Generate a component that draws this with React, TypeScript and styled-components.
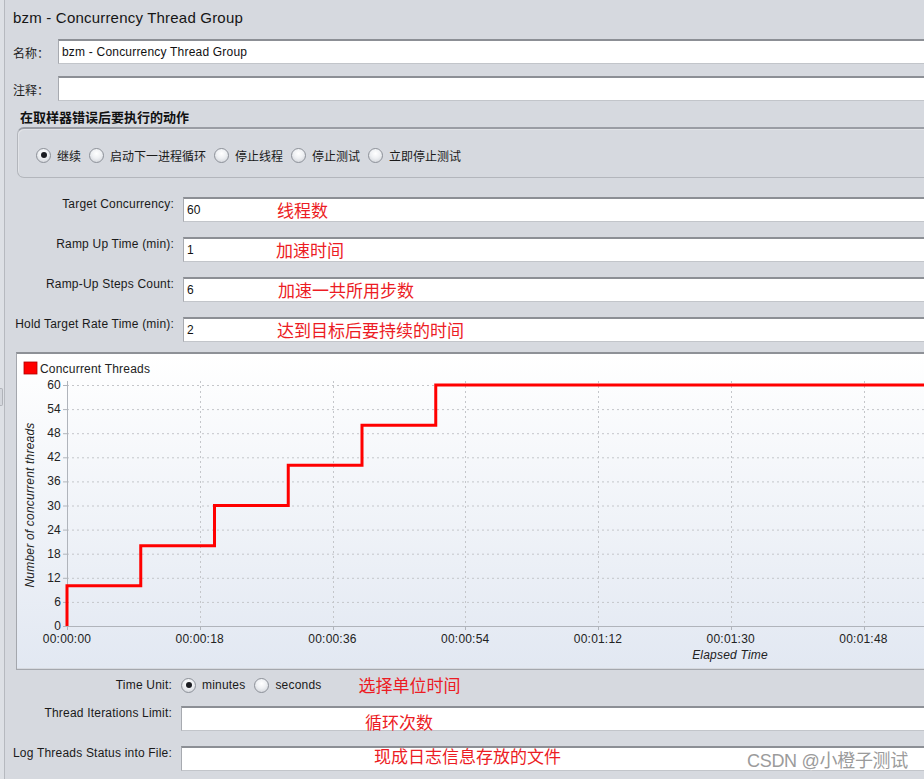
import React from 'react';
import styled, { createGlobalStyle } from 'styled-components';

const GlobalStyle = createGlobalStyle`
  html, body {
    margin: 0;
    padding: 0;
    background: #d6d9df;
    overflow: hidden;
  }
  body {
    font-family: "Liberation Sans", Arial, "Noto Sans CJK SC", sans-serif;
    font-size: 12px;
    color: #1e1e1e;
  }
`;

const CJK = `"Liberation Sans", Arial, "Noto Sans CJK SC", sans-serif`;

/////////////////////////////// CHART DATA /////////////////////////////////
const PX_PER_SEC = 132.75 / 18;
const X0 = 50;
const Y_TOP = 31;
const Y_BOTTOM = 272;
const yOf = (v: number) => Y_BOTTOM - (v / 60) * (Y_BOTTOM - Y_TOP);
const xOf = (sec: number) => X0 + sec * PX_PER_SEC;
const yTicks = [0, 6, 12, 18, 24, 30, 36, 42, 48, 54, 60];
const xTicks = [0, 18, 36, 54, 72, 90, 108];
const fmt = (s: number) => {
    const p = (n: number) => String(n).padStart(2, '0');
    return `00:${p(Math.floor(s / 60))}:${p(s % 60)}`;
};
const stepPoints = () => {
    const pts: string[] = [`${xOf(0)},${yOf(0)}`];
    for (let i = 0; i < 6; i++) {
        pts.push(`${xOf(i * 10)},${yOf((i + 1) * 10)}`);
        pts.push(`${xOf((i + 1) * 10)},${yOf((i + 1) * 10)}`);
    }
    pts.push(`${xOf(180)},${yOf(60)}`);
    return pts.join(' ');
};

const ThreadsChart = () =>
    <svg width="1000" height="314" viewBox="0 0 1000 314" style={{ display: 'block' }}>
        <defs>
            <linearGradient id="bg" x1="0" y1="0" x2="0" y2="1">
                <stop offset="0" stopColor="#ffffff" />
                <stop offset="1" stopColor="#e2e8f2" />
            </linearGradient>
        </defs>
        <rect x="0" y="0" width="1000" height="314" fill="url(#bg)" />
        <rect x="7" y="8" width="13" height="12" fill="#ff0000" stroke="#b00000" strokeWidth="0.8" />
        <text x="23" y="18.5" fontSize="12" letterSpacing="0.2" fontFamily="Liberation Sans, Arial, sans-serif" fill="#222">Concurrent Threads</text>

        {yTicks.map(v =>
            <g key={v}>
                {v > 0 && <line x1={X0} x2="1000" y1={yOf(v) + 0.5} y2={yOf(v) + 0.5} stroke="#c4c6ca" strokeDasharray="2 3" />}
                <line x1={X0 - 4} x2={X0} y1={yOf(v) + 0.5} y2={yOf(v) + 0.5} stroke="#b0b4bb" />
                <text x={X0 - 6} y={yOf(v) + 4} fontSize="12" textAnchor="end" fontFamily="Liberation Sans, Arial, sans-serif" fill="#222">{v}</text>
            </g>
        )}
        {xTicks.map(s =>
            <g key={s}>
                {s > 0 && <line x1={Math.round(xOf(s)) + 0.5} x2={Math.round(xOf(s)) + 0.5} y1={Y_TOP - 4} y2={Y_BOTTOM} stroke="#c4c6ca" strokeDasharray="2 3" />}
                <line x1={Math.round(xOf(s)) + 0.5} x2={Math.round(xOf(s)) + 0.5} y1={Y_BOTTOM} y2={Y_BOTTOM + 4} stroke="#b0b4bb" />
                <text x={xOf(s)} y="288.5" fontSize="12" letterSpacing="0.2" textAnchor="middle" fontFamily="Liberation Sans, Arial, sans-serif" fill="#222">{fmt(s)}</text>
            </g>
        )}
        <line x1={X0 + 0.5} x2={X0 + 0.5} y1={Y_TOP - 4} y2={Y_BOTTOM} stroke="#b0b4bb" />
        <line x1={X0} x2="1000" y1={Y_BOTTOM + 0.5} y2={Y_BOTTOM + 0.5} stroke="#b0b4bb" />

        <polyline points={stepPoints()} fill="none" stroke="#ff0000" strokeWidth="3" />

        <text x="713" y="305" fontSize="12" fontStyle="italic" textAnchor="middle" fontFamily="Liberation Sans, Arial, sans-serif" fill="#222">Elapsed Time</text>
        <text transform="translate(14 151) rotate(-90)" fontSize="12" fontStyle="italic" textAnchor="middle" dominantBaseline="middle" fontFamily="Liberation Sans, Arial, sans-serif" fill="#222">Number of concurrent threads</text>
    </svg>
;

const Radio = ({ checked }: { checked?: boolean }) =>
    <RadioCircle>{checked && <RadioDot />}</RadioCircle>
;

const ERROR_ACTIONS = ['继续', '启动下一进程循环', '停止线程', '停止测试', '立即停止测试'];

const FIELDS = [
    { label: 'Target Concurrency:', value: '60', note: '线程数', noteX: 93 },
    { label: 'Ramp Up Time (min):', value: '1', note: '加速时间', noteX: 92 },
    { label: 'Ramp-Up Steps Count:', value: '6', note: '加速一共所用步数', noteX: 94 },
    { label: 'Hold Target Rate Time (min):', value: '2', note: '达到目标后要持续的时间', noteX: 93 },
];

const App = () =>
    <Page>
        <GlobalStyle />
        <Rail>
            <RailHandle />
        </Rail>
        <Main>
            <Title>bzm - Concurrency Thread Group</Title>
            <NameRow>
                <ShortLabel>名称：</ShortLabel>
                <Field>bzm - Concurrency Thread Group</Field>
            </NameRow>
            <NameRow $top={12}>
                <ShortLabel>注释：</ShortLabel>
                <Field />
            </NameRow>

            <GroupTitle>在取样器错误后要执行的动作</GroupTitle>
            <GroupBox>
                {ERROR_ACTIONS.map((a, i) =>
                    <RadioOption key={a}>
                        <Radio checked={i === 0} />
                        <OptionText>{a}</OptionText>
                    </RadioOption>
                )}
            </GroupBox>

            <FormArea>
                {FIELDS.map(f =>
                    <FormRow key={f.label}>
                        <FormLabel>{f.label}</FormLabel>
                        <Field>
                            {f.value}
                            <Note $x={f.noteX} $dy={0}>{f.note}</Note>
                        </Field>
                    </FormRow>
                )}
            </FormArea>

            <ChartPanel>
                <ThreadsChart />
            </ChartPanel>

            <UnitRow>
                <FormLabel $w={159} $line={26}>Time Unit:</FormLabel>
                <RadioOption>
                    <Radio checked />
                    <OptionText $latin>minutes</OptionText>
                </RadioOption>
                <RadioOption>
                    <Radio />
                    <OptionText $latin>seconds</OptionText>
                </RadioOption>
                <UnitNote>选择单位时间</UnitNote>
            </UnitRow>

            <FormRow $top={8} $gap={9}>
                <FormLabel $w={159}>Thread Iterations Limit:</FormLabel>
                <Field>
                    <Note $x={183} $dy={3}>循环次数</Note>
                </Field>
            </FormRow>
            <FormRow $top={15} $gap={9}>
                <FormLabel $w={159}>Log Threads Status into File:</FormLabel>
                <Field>
                    <Note $x={192} $dy={-3}>现成日志信息存放的文件</Note>
                </Field>
            </FormRow>
        </Main>
        <Watermark>CSDN @小橙子测试</Watermark>
    </Page>
;

/////////////////////////////// PAGE /////////////////////////////////
const Page = styled.div`
    position: relative;
    display: flex;
    width: 924px;
    height: 779px;
    overflow: hidden;
    background: #d6d9df;
    letter-spacing: 0.2px;
`;

const Rail = styled.div`
    width: 4px;
    flex-shrink: 0;
    background: #dde0e5;
    border-right: 1px solid #b6b9bf;
    display: flex;
    flex-direction: column;
`;

const RailHandle = styled.div`
    margin-top: 388px;
    height: 18px;
    width: 3px;
    box-sizing: border-box;
    border: 1px solid #b0b3b9;
    border-left: none;
    border-radius: 0 2px 2px 0;
    background: #d3d6dc;
`;

const Main = styled.div`
    flex: 1;
    min-width: 0;
    display: flex;
    flex-direction: column;
    padding-left: 8px;
`;

const Title = styled.div`
    height: 39px;
    line-height: 36px;
    font-size: 15px;
    color: #151515;
`;

/////////////////////////////// FIELDS /////////////////////////////////
const NameRow = styled.div<{ $top?: number }>`
    display: flex;
    align-items: center;
    height: 25px;
    margin-top: ${p => p.$top || 0}px;
`;

const ShortLabel = styled.div`
    width: 45px;
    flex-shrink: 0;
    font-family: ${CJK};
    font-size: 12px;
    padding-top: 1px;
    letter-spacing: 0;
`;

const Field = styled.div`
    position: relative;
    flex: 1;
    height: 25px;
    box-sizing: border-box;
    background: #ffffff;
    border-top: 2px solid #8c8f95;
    border-left: 1px solid #a7aab0;
    border-bottom: 1px solid #c2c5ca;
    padding-left: 3px;
    display: flex;
    align-items: center;
    font-size: 12px;
    color: #111;
`;

const Note = styled.span<{ $x: number; $dy: number }>`
    position: absolute;
    left: ${p => p.$x}px;
    top: 50%;
    transform: translateY(calc(-50% - 1px + ${p => p.$dy}px));
    font-family: "Noto Sans CJK SC", sans-serif;
    font-size: 17px;
    letter-spacing: 0;
    color: #ec1c24;
    white-space: nowrap;
`;

/////////////////////////////// GROUP /////////////////////////////////
const GroupTitle = styled.div`
    margin-top: 6px;
    height: 20px;
    line-height: 20px;
    padding-left: 7px;
    font-family: "Noto Sans CJK SC", sans-serif;
    font-weight: bold;
    font-size: 13px;
    letter-spacing: 0;
    color: #111;
`;

const GroupBox = styled.div`
    margin-left: 4px;
    margin-right: -8px;
    height: 51px;
    box-sizing: border-box;
    border: 1px solid #b3b6bc;
    border-top: 2px solid #9a9da4;
    border-radius: 7px;
    box-shadow: inset 1px 1px 0 #e2e4e8;
    display: flex;
    align-items: center;
    gap: 8px;
    padding: 4px 0 0 18px;
`;

const RadioOption = styled.label`
    display: flex;
    align-items: center;
    gap: 6px;
`;

const RadioCircle = styled.span`
    width: 15px;
    height: 15px;
    box-sizing: border-box;
    border-radius: 50%;
    border: 1px solid #8d9199;
    background: radial-gradient(circle at 50% 35%, #ffffff 0%, #eef0f3 45%, #c9ccd2 100%);
    display: flex;
    align-items: center;
    justify-content: center;
`;

const RadioDot = styled.span`
    width: 6px;
    height: 6px;
    border-radius: 50%;
    background: #1b1d22;
`;

const OptionText = styled.span<{ $latin?: boolean }>`
    font-family: ${p => p.$latin ? CJK : `"Noto Sans CJK SC", sans-serif`};
    font-size: 12px;
    letter-spacing: ${p => p.$latin ? '0.2px' : '0'};
    color: #1a1a1a;
`;

/////////////////////////////// FORM /////////////////////////////////
const FormArea = styled.div`
    margin-top: 19px;
    display: flex;
    flex-direction: column;
    gap: 15px;
`;

const FormRow = styled.div<{ $top?: number; $gap?: number }>`
    display: flex;
    align-items: flex-start;
    gap: ${p => p.$gap ?? 9}px;
    height: 25px;
    margin-top: ${p => p.$top || 0}px;
`;

const FormLabel = styled.div<{ $w?: number; $line?: number }>`
    width: ${p => p.$w ?? 161}px;
    flex-shrink: 0;
    text-align: right;
    line-height: ${p => p.$line ?? 14}px;
    font-size: 12px;
    color: #1a1a1a;
    white-space: nowrap;
`;

/////////////////////////////// CHART /////////////////////////////////
const ChartPanel = styled.div`
    margin-top: 10px;
    margin-left: 3px;
    margin-right: -6px;
    height: 318px;
    box-sizing: border-box;
    border: 1px solid #a4a7ad;
    border-top: 2px solid #8e9197;
    overflow: hidden;
`;

/////////////////////////////// BOTTOM /////////////////////////////////
const UnitRow = styled.div`
    display: flex;
    align-items: center;
    gap: 9px;
    height: 26px;
    margin-top: 2px;
`;

const UnitNote = styled.span`
    margin-left: 28px;
    font-family: "Noto Sans CJK SC", sans-serif;
    font-size: 17px;
    letter-spacing: 0;
    color: #ec1c24;
    margin-top: -1px;
`;

const Watermark = styled.div`
    position: absolute;
    right: 16px;
    top: 746px;
    font-family: "Liberation Sans", "Noto Sans CJK SC", sans-serif;
    font-size: 18px;
    color: #9b9b9b;
    text-shadow: 1px 1px 0 #ffffff, -1px 0 0 #ffffff;
    letter-spacing: -0.3px;
`;

export default App;
